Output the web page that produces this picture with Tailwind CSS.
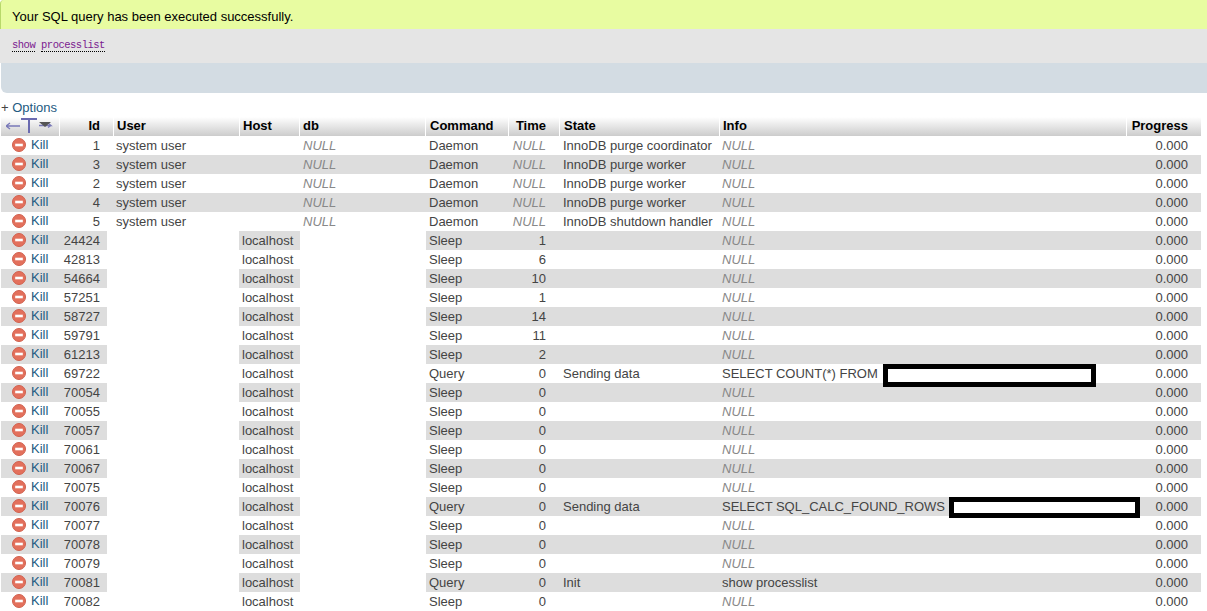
<!DOCTYPE html>
<html lang="en">
  <head>
    <meta charset="UTF-8" />
    <title>show processlist</title>
    <script src="https://cdn.jsdelivr.net/npm/@tailwindcss/browser@4"></script>
  </head>
  <body class="bg-white overflow-hidden font-['Liberation_Sans',sans-serif] text-[13px] text-[#444]">
    <div class="h-[29px] pl-[11px] bg-[#e8fca1] border-l border-[#b8d86a] rounded-tl-sm leading-[34px] text-[13px] text-black">Your SQL query has been executed successfully.</div>
    <div class="h-[34px] pl-3 bg-[#e5e5e5] font-['Liberation_Mono',monospace] text-[10.5px] tracking-[-0.5px] leading-[33px] text-[#7a1a8f]">
      <span class="border-b border-dotted border-black">show</span> <span class="border-b border-dotted border-black">processlist</span>
    </div>
    <div class="h-[30px] ml-px bg-[#d3dce3] rounded-bl-md"></div>

    <div class="h-6 pl-px pt-[7px] leading-[16px] text-[#235a81]"><span class="text-[#444]">+</span> Options</div>

    <table class="ml-px w-[1200px] table-fixed border-separate border-spacing-0 leading-[19px]">
      <thead>
        <tr class="h-[19px] text-[13px] text-black">
          <th class="w-[59px] h-[19px] p-0 align-top border-r border-white bg-linear-to-b from-white to-[#cccccc]">
            <svg class="block ml-[5px]" width="48" height="19" viewBox="0 0 48 19">
              <path d="M0 9H14M0 9l4-3M0 9l4 3" stroke="#7878b8" stroke-width="1.3" fill="none"/>
              <path d="M15 2H31M23 2V16" stroke="#6a6ab0" stroke-width="2" fill="none"/>
              <path d="M33 8.5H45l-3-2.5M45 8.5l-3 2" stroke="#7878b8" stroke-width="1.3" fill="none"/>
              <path d="M33 5H45L39 10Z" fill="#555"/>
            </svg>
          </th>
          <th class="w-[54px] p-0 pr-[13px] align-top leading-[17px] text-right font-bold border-r border-white bg-linear-to-b from-white to-[#cccccc]">Id</th>
          <th class="w-[126px] p-0 pl-[3px] align-top leading-[17px] text-left font-bold border-r border-white bg-linear-to-b from-white to-[#cccccc]">User</th>
          <th class="w-[60px] p-0 pl-[3px] align-top leading-[17px] text-left font-bold border-r border-white bg-linear-to-b from-white to-[#cccccc]">Host</th>
          <th class="w-[126px] p-0 pl-[3px] align-top leading-[17px] text-left font-bold border-r border-white bg-linear-to-b from-white to-[#cccccc]">db</th>
          <th class="w-[83px] p-0 pl-[4px] align-top leading-[17px] text-left font-bold border-r border-white bg-linear-to-b from-white to-[#cccccc]">Command</th>
          <th class="w-[51px] p-0 pr-[13px] align-top leading-[17px] text-right font-bold border-r border-white bg-linear-to-b from-white to-[#cccccc]">Time</th>
          <th class="w-[160px] p-0 pl-[4px] align-top leading-[17px] text-left font-bold border-r border-white bg-linear-to-b from-white to-[#cccccc]">State</th>
          <th class="w-[407px] p-0 pl-[3px] align-top leading-[17px] text-left font-bold border-r border-white bg-linear-to-b from-white to-[#cccccc]">Info</th>
          <th class="p-0 pr-[13px] align-top leading-[17px] text-right font-bold bg-linear-to-b from-white to-[#cccccc]">Progress</th>
        </tr>
      </thead>
      <tbody id="rows"></tbody>
    </table>

    <script>
      // id, user, host, db, command, time, state, info
      const sys = "system user";
      const procs = [
        [1, sys, "", "NULL", "Daemon", "NULL", "InnoDB purge coordinator", "NULL"],
        [3, sys, "", "NULL", "Daemon", "NULL", "InnoDB purge worker", "NULL"],
        [2, sys, "", "NULL", "Daemon", "NULL", "InnoDB purge worker", "NULL"],
        [4, sys, "", "NULL", "Daemon", "NULL", "InnoDB purge worker", "NULL"],
        [5, sys, "", "NULL", "Daemon", "NULL", "InnoDB shutdown handler", "NULL"],
        [24424, "", "localhost", "", "Sleep", 1, "", "NULL"],
        [42813, "", "localhost", "", "Sleep", 6, "", "NULL"],
        [54664, "", "localhost", "", "Sleep", 10, "", "NULL"],
        [57251, "", "localhost", "", "Sleep", 1, "", "NULL"],
        [58727, "", "localhost", "", "Sleep", 14, "", "NULL"],
        [59791, "", "localhost", "", "Sleep", 11, "", "NULL"],
        [61213, "", "localhost", "", "Sleep", 2, "", "NULL"],
        [69722, "", "localhost", "", "Query", 0, "Sending data", "SELECT COUNT(*) FROM"],
        [70054, "", "localhost", "", "Sleep", 0, "", "NULL"],
        [70055, "", "localhost", "", "Sleep", 0, "", "NULL"],
        [70057, "", "localhost", "", "Sleep", 0, "", "NULL"],
        [70061, "", "localhost", "", "Sleep", 0, "", "NULL"],
        [70067, "", "localhost", "", "Sleep", 0, "", "NULL"],
        [70075, "", "localhost", "", "Sleep", 0, "", "NULL"],
        [70076, "", "localhost", "", "Query", 0, "Sending data", "SELECT SQL_CALC_FOUND_ROWS"],
        [70077, "", "localhost", "", "Sleep", 0, "", "NULL"],
        [70078, "", "localhost", "", "Sleep", 0, "", "NULL"],
        [70079, "", "localhost", "", "Sleep", 0, "", "NULL"],
        [70081, "", "localhost", "", "Query", 0, "Init", "show processlist"],
        [70082, "", "localhost", "", "Sleep", 0, "", "NULL"],
      ];

      const killIcon = `<svg class="block ml-[11px] mr-[5px] mt-[2px]" width="14" height="14" viewBox="0 0 14 14"><circle cx="7" cy="7" r="6.5" fill="#e3705c" stroke="#d0604e"/><rect x="3.2" y="5.7" width="7.6" height="2.6" fill="#fff"/></svg>`;
      const nullCell = (v) => v === "NULL" ? `<i class="text-[#888]">NULL</i>` : v;
      // blacked out parts of the queries, they spill over the row below
      const redactions = {
        69722: `<span class="absolute z-10 left-[163px] top-0 w-[213px] h-[23px] border-[5px] border-black bg-white"></span>`,
        70076: `<span class="absolute z-10 left-[229px] top-0 w-[191px] h-[21px] border-[5px] border-black bg-white"></span>`,
      };

      document.getElementById("rows").innerHTML = procs.map((p, i) => {
        const bg = i % 2 ? "bg-[#dddddd]" : "bg-white";
        const [id, user, host, db, cmd, time, state, info] = p;
        // threads with no user: grey stops short of the empty user and db cells
        const idCell = user
          ? `<td class="h-[19px] p-0 pr-[14px] text-right ${bg}">${id}</td><td class="p-0 pl-[2px] ${bg}">${user}</td>`
          : `<td colspan="2" class="h-[19px] p-0"><div class="w-[47px] h-[19px] pr-[7px] text-right ${bg}">${id}</div></td>`;
        const hostEdge = i % 2 && host ? "shadow-[-1px_0_0_#dddddd]" : "";
        return `<tr class="h-[19px]">
          <td class="h-[19px] p-0 ${bg}"><div class="flex h-[19px] leading-[17px] text-[#235a81]">${killIcon}Kill</div></td>
          ${idCell}
          <td class="p-0 pl-[2px] ${hostEdge} ${bg}">${host}</td>
          <td class="p-0 pl-[3px] ${user ? bg : "bg-white"}">${nullCell(db)}</td>
          <td class="p-0 pl-[3px] ${bg}">${cmd}</td>
          <td class="p-0 pr-[14px] text-right ${bg}">${nullCell(time)}</td>
          <td class="p-0 pl-[3px] whitespace-nowrap ${bg}">${state}</td>
          <td class="relative p-0 pl-[2px] whitespace-nowrap ${bg}">${nullCell(info)}${redactions[id] || ""}</td>
          <td class="p-0 pr-[13px] text-right ${bg}">0.000</td>
        </tr>`;
      }).join("");
    </script>
  </body>
</html>
